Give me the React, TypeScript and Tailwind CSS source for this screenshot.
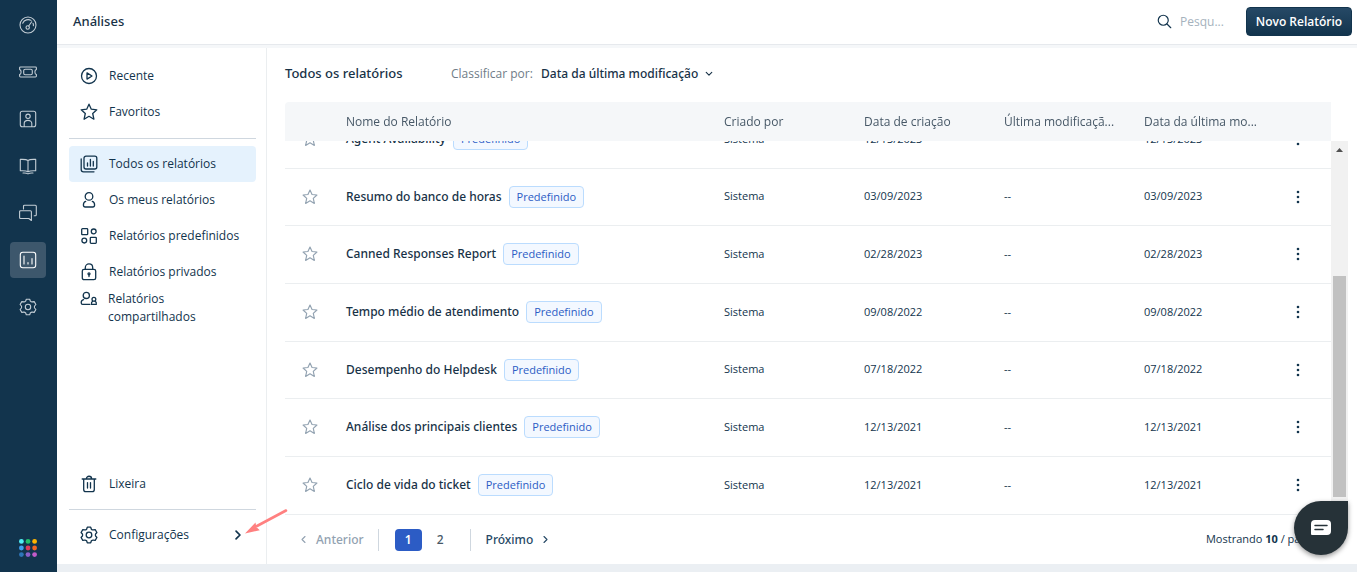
import { useLayoutEffect, useRef } from "react";
import type { ReactNode } from "react";
import clsx from "clsx";

type IconProps = { size?: number; strokeWidth?: number; className?: string; children: ReactNode };

function Icon({ size = 18, strokeWidth = 1.3, className, children }: IconProps) {
  return (
    <svg
      width={size}
      height={size}
      viewBox="0 0 18 18"
      fill="none"
      stroke="currentColor"
      strokeWidth={strokeWidth}
      strokeLinecap="round"
      strokeLinejoin="round"
      className={clsx("shrink-0", className)}
      aria-hidden="true"
    >
      {children}
    </svg>
  );
}

const STAR_PATH = "M9 1.200l2.300 5 5.500.6-4.100 3.700 1.200 5.700L9 13.300l-4.900 2.900 1.200-5.700-4.100-3.700 5.500-.6z";
const GEAR_PATH =
  "M7.300 1.200h3.400l.7 2c.5.500 1.200.8 1.900.7l1.900-.3 1.700 2.900-1.300 1.500c-.3.600-.3 1.400 0 2l1.300 1.500-1.700 2.900-1.900-.3c-.7-.1-1.400.2-1.900.7l-.7 2H7.300l-.7-2c-.5-.5-1.200-.8-1.900-.7l-1.900.3-1.700-2.900 1.300-1.500c.3-.6.3-1.400 0-2L1.100 6.500l1.700-2.900 1.900.3c.7.1 1.400-.2 1.900-.7z";

const railItems = [
  {
    label: "Painel",
    icon: (
      <>
        <circle cx="9" cy="9" r="8" />
        <path d="M3.700 7.200C5.200 3.600 9.500 2.800 12 4.400M14 7.200c.4.8.5 1.700.4 2.600M9.700 10l3-4.200" />
        <circle cx="8.700" cy="11.500" r="1.700" />
      </>
    ),
  },
  {
    label: "Tickets",
    icon: (
      <>
        <path d="M1.500 4h15a.9.9 0 0 1 .9.9v1.500c-2 .6-2 4.600 0 5.200v1.500a.9.9 0 0 1-.9.9h-15a.9.9 0 0 1-.9-.9v-1.500c2-.6 2-4.600 0-5.200V4.900a.9.9 0 0 1 .9-.9z" />
        <rect x="4.700" y="6.300" width="8.600" height="5.400" rx="1.500" />
      </>
    ),
  },
  {
    label: "Contatos",
    icon: (
      <>
        <rect x="1.300" y="1.300" width="15.400" height="15.400" rx="2" />
        <circle cx="9" cy="6.300" r="2.200" />
        <path d="M5.200 16.500v-3c0-4.200 7.600-4.200 7.600 0v3" />
      </>
    ),
  },
  {
    label: "Soluções",
    icon: (
      <>
        <path d="M9 3.500C7.500 2.300 5 2.200 1.300 2.400v11.400c3.700-.2 6.200 0 7.700 1M9 3.500c1.500-1.200 4-1.300 7.700-1.100v11.400c-3.700-.2-6.200 0-7.700 1zM9 3.500v11.300M4 16c2.400-.2 3.600 0 5 .9 1.400-.9 2.600-1.100 5-.9" />
      </>
    ),
  },
  {
    label: "Bate-papo",
    icon: (
      <>
        <path d="M4.500 5V2.200a1 1 0 0 1 1-1h10.800a1 1 0 0 1 1 1v8.500a1 1 0 0 1-1 1h-1.100" />
        <path d="M1.600 6.700h9.800a1 1 0 0 1 1 1V16.500l-2.600-2H1.600a1 1 0 0 1-1-1V7.700a1 1 0 0 1 1-1z" />
      </>
    ),
  },
  {
    label: "Análises",
    active: true,
    icon: (
      <>
        <rect x="1.300" y="1.300" width="15.400" height="15.400" rx="2.500" />
        <path d="M5 5v8M9 11.500V13M13 7.500V13" />
      </>
    ),
  },
  {
    label: "Administração",
    icon: (
      <>
        <path d={GEAR_PATH} />
        <circle cx="9" cy="9" r="2.700" />
      </>
    ),
  },
];

const APP_DOTS = ["#4ff0f5", "#22c06b", "#ffb400", "#3f9ff0", "#dc3b5c", "#f26522", "#2e75b8", "#8d5fc9", "#c25cc9"];

const recentLinks = [
  {
    label: "Recente",
    icon: (
      <>
        <circle cx="9" cy="9" r="7.500" />
        <path d="M7 5.900v6.200L12 9z" />
      </>
    ),
  },
  { label: "Favoritos", icon: <path d={STAR_PATH} /> },
];

const reportLinks = [
  {
    label: "Todos os relatórios",
    active: true,
    icon: (
      <>
        <rect x="4" y="1.200" width="12.800" height="12.800" rx="2" />
        <path d="M1.200 4v10.500a2.300 2.300 0 0 0 2.300 2.300H14M7.500 8v3M10.400 4.500V11M13.300 6.500V11" />
      </>
    ),
  },
  {
    label: "Os meus relatórios",
    icon: (
      <>
        <circle cx="9" cy="5.400" r="3.800" />
        <path d="M5.700 10.400c-1.600.4-2.300 1.700-2.300 3.700 0 1.300.6 1.900 1.800 1.900h7.600c1.200 0 1.800-.6 1.800-1.900 0-2-.7-3.300-2.300-3.700" />
      </>
    ),
  },
  {
    label: "Relatórios predefinidos",
    icon: (
      <>
        <rect x="1.700" y="1.700" width="6" height="6" rx=".8" />
        <circle cx="13.700" cy="4.400" r="2.400" />
        <circle cx="4.300" cy="13.600" r="2.400" />
        <rect x="10.300" y="10.300" width="6" height="6" rx=".8" />
      </>
    ),
  },
  {
    label: "Relatórios privados",
    icon: (
      <>
        <rect x="2.300" y="6.300" width="13.400" height="10.400" rx="1.800" />
        <path d="M5.300 6V4.700c0-5 7.400-5 7.400 0V6M9 11.500v2" />
        <circle cx="9" cy="10.800" r="1" />
      </>
    ),
  },
];

const reports = [
  { name: "Agent Availability", created: "12/13/2023" },
  { name: "Resumo do banco de horas", created: "03/09/2023" },
  { name: "Canned Responses Report", created: "02/28/2023" },
  { name: "Tempo médio de atendimento", created: "09/08/2022" },
  { name: "Desempenho do Helpdesk", created: "07/18/2022" },
  { name: "Análise dos principais clientes", created: "12/13/2021" },
  { name: "Ciclo de vida do ticket", created: "12/13/2021" },
];

function Rail() {
  return (
    <nav aria-label="Principal" className="flex w-[57px] shrink-0 flex-col items-start bg-[#12344d] pt-[7px] pb-[15px] pl-[10px]">
      <div className="flex flex-col gap-[11px]">
        {railItems.map((item) => (
          <a
            key={item.label}
            href="#"
            aria-label={item.label}
            className={clsx(
              "flex h-9 w-9 items-center justify-center rounded",
              item.active ? "bg-[#3d576c] text-white" : "text-[#c3cdd5]",
            )}
          >
            <Icon strokeWidth={1.1}>{item.icon}</Icon>
          </a>
        ))}
      </div>
      <button type="button" aria-label="Aplicativos" className="mt-auto flex w-9 justify-center">
        <svg width="18" height="18" viewBox="0 0 18 18" aria-hidden="true">
          {APP_DOTS.map((color, i) => (
            <circle key={color} cx={2.4 + (i % 3) * 6.6} cy={2.4 + Math.floor(i / 3) * 6.6} r="2.400" fill={color} />
          ))}
        </svg>
      </button>
    </nav>
  );
}

function SideLink({ label, icon, active, trailing }: { label: string; icon: ReactNode; active?: boolean; trailing?: ReactNode }) {
  return (
    <a
      href="#"
      className={clsx("flex h-9 items-center gap-[11px] rounded px-[11px]", active && "bg-[#e5f2fd] font-medium")}
    >
      <Icon>{icon}</Icon>
      <span className="whitespace-nowrap">{label}</span>
      {trailing}
    </a>
  );
}

function Sidebar() {
  return (
    <aside className="flex w-[210px] shrink-0 flex-col border-r border-[#ebeef0] pt-[10px] pr-[10px] pb-[11px] pl-3 text-[12px] text-[#12344d]">
      {recentLinks.map((link) => (
        <SideLink key={link.label} {...link} />
      ))}
      <hr className="mt-2 mb-[7px] border-[#cfd7df]" />
      {reportLinks.map((link) => (
        <SideLink key={link.label} {...link} />
      ))}
      <a href="#" className="flex gap-[10px] px-[11px] leading-[18px]">
        <Icon>
          <circle cx="6.300" cy="5.400" r="3.100" />
          <path d="M3.600 9.600C1.900 10 1.200 11.200 1.200 12.700c0 1.100.5 1.600 1.500 1.600h7.200M12.700 11.300c-1.100.4-1.500 1.300-1.200 3h4.800c.3-1.700-.1-2.600-1.200-3" />
          <circle cx="13.900" cy="9.300" r="1.900" />
        </Icon>
        <span>
          Relatórios
          <br />
          compartilhados
        </span>
      </a>
      <div className="mt-auto">
        <SideLink
          label="Lixeira"
          icon={
            <>
              <path d="M2.200 4h13.600M3.700 4v10.400a2.200 2.200 0 0 0 2.200 2.200h6.200a2.200 2.200 0 0 0 2.200-2.200V4M6.400 3.800c0-3.400 5.200-3.400 5.200 0M7.500 7.600v5.500M10.500 7.600v5.500" />
            </>
          }
        />
        <hr className="my-[7px] border-[#cfd7df]" />
        <SideLink
          label="Configurações"
          icon={
            <>
              <path d={GEAR_PATH} />
              <circle cx="9" cy="9" r="2.800" />
            </>
          }
          trailing={
            <Icon size={14} strokeWidth={2.2} className="ml-auto">
              <path d="M6.500 4l5 5-5 5" />
            </Icon>
          }
        />
      </div>
    </aside>
  );
}

function ReportsTable() {
  const scroller = useRef<HTMLDivElement>(null);

  // open on the last rows of the page
  useLayoutEffect(() => {
    if (scroller.current) scroller.current.scrollTop = scroller.current.scrollHeight;
  }, []);

  return (
    <div className="flex min-h-0 flex-1">
      <div ref={scroller} className="min-w-0 flex-1 overflow-y-auto [scrollbar-width:none]">
        <table className="w-full table-fixed text-left text-[12px] text-[#12344d]">
          <thead className="sticky top-0 z-10 bg-[#f5f7f9] whitespace-nowrap text-[#475867]">
            <tr className="h-[39px]">
              <th className="w-[51px] rounded-tl" aria-label="Favorito" />
              <th className="px-[10px] font-normal">Nome do Relatório</th>
              <th className="w-[140px] px-[10px] font-normal">Criado por</th>
              <th className="w-[140px] px-[10px] font-normal">Data de criação</th>
              <th className="w-[140px] px-[10px] font-normal">Última modificaçã...</th>
              <th className="w-[140px] px-[10px] font-normal">Data da última mo...</th>
              <th className="w-[57px]" aria-label="Ações" />
            </tr>
          </thead>
          <tbody className="text-[11px]">
            {reports.map((report) => (
              <tr key={report.name} className="h-[58px] border-b border-[#ebeef0] nth-[3n+2]:h-[57px]">
                <td>
                  <button type="button" aria-label="Favoritar" className="ml-[17px] block text-[#92a2b1]">
                    <Icon size={16}>
                      <path d={STAR_PATH} />
                    </Icon>
                  </button>
                </td>
                <td className="px-[10px]">
                  <div className="flex items-center gap-[7px]">
                    <a href="#" className="font-['Noto_Sans',sans-serif] text-[12px] font-medium text-[#183247]">
                      {report.name}
                    </a>
                    <span className="rounded-sm border border-[#bbdcfe] bg-[#f3f8ff] px-[7px] leading-5 text-[#2c5cc5]">
                      Predefinido
                    </span>
                  </div>
                </td>
                <td className="px-[10px]">Sistema</td>
                <td className="px-[10px]">{report.created}</td>
                <td className="px-[10px]">{report.name !== "Agent Availability" && "--"}</td>
                <td className="px-[10px]">{report.created}</td>
                <td>
                  <button type="button" aria-label="Mais ações" className="ml-4 block">
                    <svg width="16" height="16" viewBox="0 0 16 16" fill="currentColor" aria-hidden="true">
                      <circle cx="8" cy="3" r="1.300" />
                      <circle cx="8" cy="8" r="1.300" />
                      <circle cx="8" cy="13" r="1.300" />
                    </svg>
                  </button>
                </td>
              </tr>
            ))}
          </tbody>
        </table>
      </div>
      <div className="mt-[39px] flex w-[17px] flex-col items-center bg-[#f1f1f1]" aria-hidden="true">
        <svg width="17" height="17" viewBox="0 0 17 17" fill="#505050">
          <path d="M5 11l3.500-4 3.500 4z" />
        </svg>
        <div className="mt-auto mb-[18px] h-[59%] w-[13px] bg-[#c1c1c1]" />
      </div>
    </div>
  );
}

function Pagination() {
  return (
    <nav
      aria-label="Paginação"
      className="flex h-[49px] items-center font-['Noto_Sans',sans-serif] text-[12px] font-medium text-[#475867]"
    >
      <button type="button" disabled className="ml-[14px] flex items-center gap-2 text-[#92a2b1]">
        <Icon size={9} strokeWidth={2.2}>
          <path d="M12 3L6 9l6 6" />
        </Icon>
        Anterior
      </button>
      <span className="ml-[14px] h-[22px] w-px bg-[#cfd7df]" />
      <button type="button" aria-current="page" className="ml-4 h-[22px] w-[27px] rounded-sm bg-[#2c5cc5] font-semibold text-white">
        1
      </button>
      <button type="button" className="ml-[5px] h-[22px] w-[27px]">
        2
      </button>
      <span className="ml-4 h-[22px] w-px bg-[#cfd7df]" />
      <button type="button" className="ml-[15px] flex items-center gap-2 text-[#264966]">
        Próximo
        <Icon size={9} strokeWidth={2.2}>
          <path d="M6 3l6 6-6 6" />
        </Icon>
      </button>
      <p className="ml-auto pr-[26px] font-['Open_Sans',sans-serif] text-[11px] font-normal text-[#12344d]">
        Mostrando <b className="font-bold">10</b> / página
      </p>
    </nav>
  );
}

export default function App() {
  return (
    <div className="relative flex h-screen overflow-hidden bg-white font-['Open_Sans','Noto_Sans',sans-serif]">
      <Rail />
      <div className="flex min-w-0 flex-1 flex-col">
        <header className="flex h-[45px] shrink-0 items-center border-b border-[#e6e9ed] pr-[5px] pb-px pl-4">
          <h1 className="font-['Noto_Sans',sans-serif] text-[13px] font-medium text-[#183247]">Análises</h1>
          <label className="ml-auto flex items-center gap-2 text-[#12344d]">
            <Icon size={15} strokeWidth={1.4}>
              <circle cx="7.500" cy="7.500" r="6" />
              <path d="M12 12L16.500 16.500" />
            </Icon>
            <input
              type="search"
              aria-label="Pesquisar"
              placeholder="Pesqu..."
              className="w-[66px] text-[12px] outline-none placeholder:text-[#a5b2bd]"
            />
          </label>
          <button
            type="button"
            className="h-[29px] w-[106px] rounded border border-[#12344d] bg-linear-to-b from-[#264966] to-[#12344d] text-[12px] font-semibold whitespace-nowrap text-white"
          >
            Novo Relatório
          </button>
        </header>
        <div className="h-[3px] shrink-0 bg-[#f5f7f9]" />
        <div className="flex min-h-0 flex-1">
          <Sidebar />
          <main className="flex min-w-0 flex-1 flex-col pr-[9px] pl-[18px]">
            <div className="flex h-[54px] shrink-0 items-center pb-[2px] font-['Noto_Sans',sans-serif] text-[12px] font-medium text-[#183247]">
              <h2 className="w-[166px] text-[13px]">Todos os relatórios</h2>
              <span className="w-[90px] font-['Open_Sans',sans-serif] font-normal text-[#6f7c87]">Classificar por:</span>
              <button type="button" className="flex items-center gap-[6px]">
                Data da última modificação
                <Icon size={10} strokeWidth={2}>
                  <path d="M4 6l5 5 5-5" />
                </Icon>
              </button>
            </div>
            <ReportsTable />
            <Pagination />
          </main>
        </div>
        <div className="h-2 shrink-0 bg-[#ebeff3]" />
      </div>

      <svg width="46" height="30" viewBox="0 0 46 30" className="absolute top-[507px] left-[243px]" aria-hidden="true">
        <path d="M43 3.500L14 19" stroke="#ff8080" strokeWidth="2.600" strokeLinecap="round" />
        <path d="M2 26.500l10.500-11 .8 4.500 3.500 3.300z" fill="#ff8080" />
      </svg>

      <button
        type="button"
        aria-label="Abrir chat"
        className="absolute right-[9px] bottom-[17px] flex h-[54px] w-[54px] items-center justify-center rounded-full rounded-tr-lg bg-[#263238] shadow-[0_2px_5px_rgba(0,0,0,0.4)]"
      >
        <svg width="20" height="16" viewBox="0 0 20 16" aria-hidden="true">
          <path d="M4 0h12a4 4 0 0 1 4 4v7a4 4 0 0 1-4 4H1a1 1 0 0 1-1-1V4a4 4 0 0 1 4-4z" fill="#fff" />
          <path d="M4 5.500h12M4 9.500h8" stroke="#263238" strokeWidth="1.500" strokeLinecap="round" />
        </svg>
      </button>
    </div>
  );
}
